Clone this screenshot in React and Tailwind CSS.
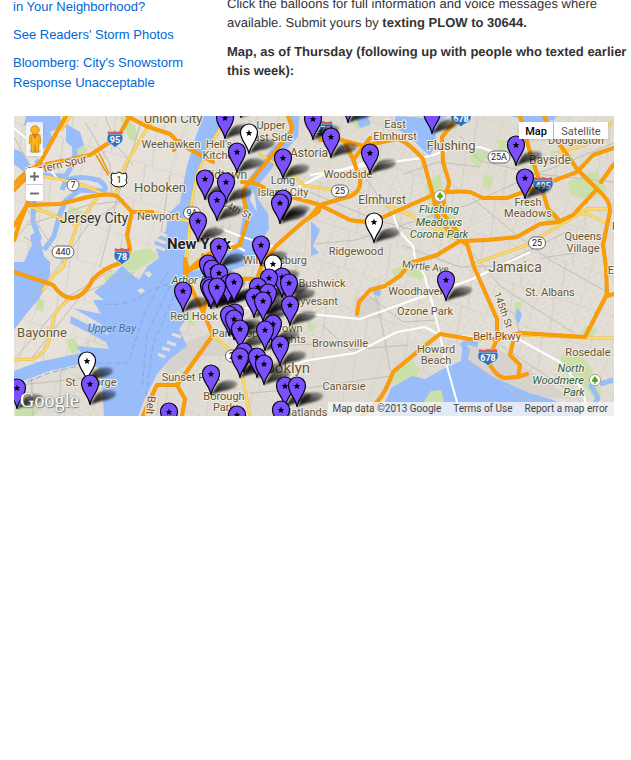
import React from 'react';

const pins = [
  [241, 97], [348, 102], [432, 113], [225, 118], [313, 119], [249, 133, 1], [331, 137],
  [516, 145], [237, 152], [370, 153], [283, 158], [525, 178], [205, 179], [226, 182],
  [217, 200], [283, 199], [280, 203], [198, 221], [374, 222, 1], [261, 245], [219, 247],
  [273, 264, 1], [208, 264], [212, 269], [219, 273], [282, 277], [269, 278], [446, 280],
  [228, 284], [234, 282], [289, 283], [209, 286], [211, 288], [217, 287], [258, 287],
  [183, 291], [268, 293], [254, 297], [263, 301], [290, 305], [235, 313], [229, 315],
  [234, 319], [273, 324], [240, 329], [265, 330], [280, 345], [244, 352], [240, 357],
  [257, 357], [264, 364], [87, 361, 1], [211, 374], [90, 384], [285, 386], [297, 386],
  [17, 388], [281, 410], [169, 412], [237, 415],
];

const orange = [
  'M66 116L53 139L41 161Q38 166 24 174L14 184',
  'M14 190L24 180L38 166L90 155L118 137L130 116',
  'M38 166L32 190L27 205L14 226', 'M27 205L20 222L14 240',
  'M127 116L146 126L170 134L180 144L213 162',
  'M27 205L60 204L88 197Q110 192 118 197L132 212L127 235L130 249Q130 255 120 263Q104 268 93 279Q84 297 72 298Q62 298 53 285L14 272',
  'M132 212L152 212', 'M174 150L180 141',
  'M288 116Q294 128 290 133L250 182Q241 190 244 199L248 219L240 245Q220 252 210 253L195 264L185 275L203 312L213 335L177 385L157 385Q151 397 143 416',
  'M185 275L185 259L188 270L199 266', 'M177 385L185 399L182 416', 'M203 312L207 300',
  'M242 182L255 183L270 191L317 204Q322 207 318 212L303 222L277 245L263 262L257 279L217 278L209 268L203 255',
  'M320 140L337 139L363 146L397 139Q407 141 423 159L433 195L444 215L467 244L474 267L497 319L497 339L490 356L490 365Q497 377 505 378L517 377L527 374',
  'M513 342L510 355L520 365L518 377',
  'M345 142L353 159L360 179Q362 190 351 196L320 205L350 220Q370 224 379 219L433 195Q450 190 470 192L483 198L507 198L537 187L577 172L593 155L614 148',
  'M370 138L353 160', 'M320 205L310 217',
  'M457 119L442 137L443 162L449 182Q449 190 443 195L445 215',
  'M433 195L437 215L450 233L467 244',
  'M520 116L530 152L542 189L548 209L558 219',
  'M544 116L558 142L577 169L597 189Q611 201 610 211L603 245L606 267L607 294L585 337L520 333L497 339L470 339L440 334L417 352L393 372Q386 392 377 402L362 416',
  'M607 296L614 294', 'M614 164L601 182',
  'M597 189L573 215L558 222L540 224L517 237L487 240L460 241L437 255L410 263L400 276L385 286L370 290L359 302L357 314',
];
const yellow = [
  'M156 116L148 127L125 165L115 195', 'M38 175L77 183L107 195', 'M100 194L77 225L63 267Q48 281 43 290',
  'M27 205L77 225', 'M72 298Q52 311 53 321L49 341Q46 352 33 359L14 360',
  'M228 116L210 145L197 175L192 199L190 222L187 259L185 275', 'M152 212L188 221',
  'M260 154L293 175L303 185L360 194L410 215L470 247', 'M473 264L527 245L587 209L610 209',
  'M580 213L588 214L604 222', 'M560 152L587 144L614 120', 'M213 335L232 352L243 379L250 416', 'M520 335L590 338L614 338', 'M70 116L62 129',
];
const white = [
  'M14 128L28 140L45 163L60 182', 'M310 175L370 165L422 158L433 155L450 149L480 147L494 152',
  'M393 214L399 231L413 246L416 263L424 274L432 302L440 335L446 363L457 402L460 416',
  'M245 308L310 314L360 319L427 295L470 280L530 252', 'M255 374L310 360L355 353L397 332L425 327L440 335',
  'M440 335L520 340L560 362L583 390L588 416', 'M217 227L240 236L277 248', 'M215 235L245 251', 'M275 200L320 176L375 160',
];
const minor = 'M105 116L118 147L133 165M85 122L110 164L112 194M28 225L88 205L122 201M14 242L44 202M140 125L116 203L100 267M22 310L62 262L88 225L124 199M17 356L68 297L112 270M31 359L83 293L135 272M170 175L160 239M231 225L215 248M248 282L270 330L290 416M213 336L270 307L314 302M230 354L302 344L350 346M315 244L356 240L437 214L470 204L520 181L614 143M310 192L376 220L414 230M337 140L374 190L404 230M404 174L438 162L480 167M472 198L513 232L550 260L614 296M470 250L500 286L574 333M402 245L460 267L530 265M498 300L515 315L520 334M510 260L570 230M368 295L403 322L437 320M322 325L350 350L408 345M374 290L383 330L390 371M460 136L480 161L537 174L614 182M541 258L590 251M250 393L300 389L391 376M465 360L495 378L520 397L550 405M500 345L575 395L590 416M61 370L59 416M31 371L33 416M97 377L18 385M14 137L43 188M24 237L44 248M28 210L66 267';
const water = [
  'M26 116L60 116L62 127L50 132L54 142L43 149L38 141L28 137L36 129L24 125Z',
  'M66 124L80 132L84 145L76 150L66 142Z',
  'M14 149L22 152L30 164L24 172L14 164Z',
  'M14 262L24 262L32 245L30 236L38 230L44 256L50 262L50 275L46 287L38 300L26 314L14 330Z',
  'M203 116L226 116L213 139L199 169L193 199L188 232L184 259L193 271L209 268L219 258L236 248L240 232L244 211L241 196L247 181L272 148L291 131L286 116L299 116L298 137L282 154L270 171L259 184L258 199L268 214L269 229L258 246L251 264L225 272L210 272L198 280L182 286L179 303L187 318L179 329L187 346L170 359L157 374L145 398L138 416L104 416L102 382L99 368L85 363L50 371L14 384L14 371L38 362L81 353L77 346L109 349L106 342L70 323L71 316L108 335L110 329L73 308L101 314L93 300L104 300L94 292L105 283L122 266L139 280L148 266L159 258L154 241L166 231L168 214L180 203L186 170L193 145Z',
  'M355 116L367 116L371 124L360 128Z',
  'M396 116L427 118L447 116L435 126L436 143L430 156L417 144L409 136L399 130L394 122Z',
  'M433 199L441 202L443 214L438 216L441 227L434 219Z',
  'M320 416L380 416L391 388L412 376L425 379L443 369L461 361L463 340L470 350L468 359L491 376L529 393L550 399L573 408L580 416Z',
  'M517 308L522 314L519 324L515 318Z', 'M374 286L381 291L380 297L373 294Z',
  'M511 116L557 116L553 121L546 119L542 127L533 122L527 127L521 119Z',
  'M311 221L320 230L313 246L319 253L311 256Z',
];
const streams = [
  'M74 132L75 160L66 176L48 176L36 160', 'M62 190L66 180Q80 175 98 180Q108 186 104 191L80 190L66 200L60 214L54 236L44 250',
  'M34 196L33 222L40 240', 'M461 346L468 342L478 345', 'M590 384L598 398L590 412', 'M600 384L613 380',
];
const parks = [
  'M119 116L135 125L138 141L130 140Z', 'M75 138L88 150L80 158L72 154Z', 'M69 206L83 211L78 226L69 218Z',
  'M134 251L150 248L158 256L144 266L134 272L120 267Z', 'M104 277L113 272L119 281L107 286Z', 'M37 297L45 301L42 312L35 309Z',
  'M426 182L440 174L445 195L448 230L437 241L430 222Z', 'M434 205L456 218L460 238L450 241Z',
  'M472 147L490 153L478 168L469 159Z', 'M568 182L597 170L607 190L590 200L570 195Z', 'M540 210L556 211L560 224L549 226Z',
  'M392 270L412 261L427 274L420 280L405 274L395 281Z', 'M498 140L516 140L514 151L499 151Z', 'M531 153L540 159L535 175L529 172Z',
  'M396 371L409 359L420 369L417 377L405 387L388 382Z', 'M422 390L432 388L437 398L425 408Z', 'M560 356L575 352L590 366L602 394L595 399L579 381L561 371Z',
  'M515 302L522 302L520 316L513 313Z', 'M258 335L267 333L269 345L259 346Z', 'M65 340L75 338L80 350L72 354Z',
  'M18 401L43 406L34 416L15 416Z', 'M186 316L196 318L194 326L187 324Z',
  'M586 325L599 330L591 337L581 334Z', 'M484 174L494 178L490 190L482 184Z',
  'M550 150L560 151L558 159L551 157Z', 'M350 120L365 116L370 126L358 130Z', 'M307 319L316 326L312 333L307 330Z',
];

const labels = [
  ['Union City', 173, 123, 13], ['Weehawken', 171, 148, 11], ["Hell's", 219, 148, 11], ['Kitchen', 221, 159, 11],
  ['Upper', 271, 129, 11], ['East Side', 270, 141, 11], ['Midtown', 224, 179, 12], ['Astoria', 309, 157, 12],
  ['Hoboken', 160, 192, 13], ['Newport', 158, 220, 11], ['Long', 283, 184, 11], ['Island City', 283, 196, 11],
  ['Williamsburg', 275, 264, 11], ['Bushwick', 322, 287, 11], ['Stuyvesant', 311, 305, 11], ['Woodside', 348, 178, 11],
  ['East', 395, 128, 11], ['Elmhurst', 395, 140, 11], ['Elmhurst', 382, 204, 12], ['Flushing', 451, 150, 13],
  ['Douglaston', 576, 144, 11], ['Bayside', 550, 164, 12], ['Fresh', 528, 206, 11], ['Meadows', 528, 217, 11],
  ['Ridgewood', 356, 255, 11], ['Queens', 583, 240, 11], ['Village', 583, 252, 11], ['Jamaica', 515, 272, 14],
  ['St. Albans', 550, 296, 11], ['Woodhaven', 417, 295, 11], ['Ozone Park', 425, 315, 11], ['Brownsville', 340, 347, 11],
  ['Howard', 436, 353, 11], ['Beach', 436, 364, 11], ['Canarsie', 344, 390, 11], ['Flatlands', 305, 416, 11],
  ['Crown', 287, 332, 11], ['Heights', 287, 343, 11], ['Brooklyn', 281, 373, 15], ['Park Slope', 238, 337, 11],
  ['Red Hook', 194, 320, 11], ['Sunset Park', 191, 381, 11], ['Borough', 224, 400, 11], ['Park', 224, 411, 11],
  ['Bayonne', 42, 337, 13], ['St. George', 91, 386, 11], ['Rosedale', 588, 356, 11], ['F', 615, 230, 11], ['E', 611, 274, 11],
];
const parkLabels = [
  ['Flushing', 439, 213, 11], ['Meadows', 439, 226, 11], ['Corona Park', 439, 238, 11],
  ['Arbor Pk', 192, 284, 11], ['North', 571, 372, 11], ['Woodmere', 558, 384, 11], ['Park', 574, 396, 11],
];

function Shield({ x, y, n }) {
  return n.length > 2 ? (
    <g transform={`translate(${x} ${y})`}>
      <path d="M-9.5-5H9.5C11.5 1 9 4 5 5.5Q2 6.5 0 9Q-2 6.5-5 5.5C-9 4-11.5 1-9.5-5Z" fill="#3272bd" stroke="#e8eef6" strokeWidth=".7" />
      <path d="M-8.5-8Q-5-6 0-8Q5-6 8.5-8L9.5-5H-9.5Z" fill="#d9585b" />
      <text y="4" textAnchor="middle" fontSize="9" fontWeight="700" fill="#fff">{n}</text>
    </g>
  ) : (
    <g transform={`translate(${x} ${y})`}>
      <path d="M-7-5H7C9.5 1 7 4 4 5.5Q1.5 6.5 0 9Q-1.5 6.5-4 5.5C-7 4-9.5 1-7-5Z" fill="#3272bd" stroke="#e8eef6" strokeWidth=".7" />
      <path d="M-7-8Q-4-6 0-8Q4-6 7-8L7.5-5H-7.5Z" fill="#d9585b" />
      <text y="4" textAnchor="middle" fontSize="9" fontWeight="700" fill="#fff">{n}</text>
    </g>
  );
}

function Route({ x, y, n }) {
  const w = n.length * 5 + 7;
  return (
    <g>
      <rect x={x - w / 2} y={y - 6} width={w} height="12" rx="6" fill="#fff" stroke="#666" />
      <text x={x} y={y + 3} textAnchor="middle" fontSize="9" fill="#222">{n}</text>
    </g>
  );
}

function ParkBadge({ x, y }) {
  return (
    <g transform={`translate(${x} ${y})`}>
      <circle r="5.6" fill="#fff" stroke="#a3a78f" />
      <path d="M0-4L3 0L2.5 2H.7V4H-.7V2H-2.5L-3 0Z" fill="#56a51d" />
    </g>
  );
}

function MapCanvas() {
  return (
    <svg viewBox="14 116 600 300" preserveAspectRatio="xMidYMid slice" className="block h-full w-full font-[Roboto,sans-serif]" role="img" aria-label="Map of New York City text reports">
      <defs>
        <pattern id="grid" width="7" height="5" patternUnits="userSpaceOnUse" patternTransform="rotate(-24)">
          <path d="M0 0H7M0 0V5" stroke="#ece8e0" strokeWidth=".9" />
        </pattern>
        <pattern id="grid2" width="6" height="9" patternUnits="userSpaceOnUse" patternTransform="rotate(32)">
          <path d="M0 0H6M0 0V9" stroke="#e9e5dd" strokeWidth=".9" />
        </pattern>
        <pattern id="blocks" width="43" height="37" patternUnits="userSpaceOnUse" patternTransform="rotate(18)">
          <path d="M0 0H43M0 0V37M17 0L24 37" stroke="#cdc9c2" strokeWidth=".8" fill="none" />
        </pattern>
        <filter id="soft" x="-30%" y="-30%" width="160%" height="160%"><feGaussianBlur stdDeviation="1.2" /></filter>
        <linearGradient id="fade" x1="0" y1="1" x2="1" y2="0">
          <stop offset="0" stopOpacity=".95" />
          <stop offset=".5" stopOpacity=".7" />
          <stop offset="1" stopOpacity=".25" />
        </linearGradient>
        <path id="shadow" d="M0 21C4 16 5 9 13 7C21 5 29 7 25 12C21 17 9 16 0 21Z" fill="url(#fade)" filter="url(#soft)" />
        <path id="balloon" d="M0 21C-1 12-8.5 8-8.5-.5A8.5 8.5 0 1 1 8.5-.5C8.5 8 1 12 0 21Z" stroke="#090611" strokeWidth="1.2" />
        <path id="star" d="M0-3.4L.9-1.1L3.4-1L1.5.6L2.1 3L0 1.7L-2.1 3L-1.5.6L-3.4-1L-.9-1.1Z" fill="#000" />
      </defs>
      <rect x="14" y="116" width="600" height="300" fill="#dfdbd2" />
      <path d="M14 116H203L186 180L150 262L60 370L14 384Z" fill="#e5e1d9" />
      <path d="M100 194L187 116H14V416H120V250ZM184 250L255 170L278 116H225ZM300 230L420 160L614 220V416H480V340H300Z" fill="url(#grid)" />
      <path d="M184 300L300 230V416H150ZM290 130L614 116V220L420 160L300 230ZM340 250H614V340H400Z" fill="url(#grid2)" />
      <rect x="14" y="116" width="600" height="300" fill="url(#blocks)" />
      <path d="M459 345L500 350L572 399L530 396L488 378ZM165 348L213 333L236 356L200 356L165 380ZM355 296L380 298L383 318L355 319Z" fill="#d8d2cd" />
      {parks.map((d) => <path key={d} d={d} fill="#cadfaa" />)}
      {water.map((d) => <path key={d} d={d} fill="#99bcfa" />)}
      {streams.map((d) => <path key={d} d={d} fill="none" stroke="#99bcfa" strokeWidth="5" strokeLinejoin="round" />)}
      <path d="M144 273l5-2 3 3-3 4ZM137 290l5-2 3 3-4 3ZM257 212l-7-12 2-12 3 9Z" fill="#e5e0d8" />
      <path d="M431 391l10-1 3 11-13 8-7-8Z" fill="#cadfaa" />
      <path d={minor} fill="none" stroke="#c3bfb8" strokeWidth="1" />
      <path d="M104 304Q130 307 151 290L176 281M168 271L145 312L128 363H91L49 373L14 387M170 286L147 334L142 388M174 296L153 344L146 397" fill="none" stroke="#86a9df" strokeWidth="1" strokeDasharray="6 3" />
      <path d="M155 232l12 4M154 239l12 4M155 246l10 4M181 337l-9-3M176 345l-9-3M170 350l-8-2M165 357l-7-3" stroke="#e4e0d8" strokeWidth="3" />
      {white.map((d) => <path key={d} d={d} fill="none" stroke="#fff" strokeWidth="2" strokeLinejoin="round" />)}
      <g fill="none" strokeLinejoin="round" strokeLinecap="round">
        {yellow.map((d) => <path key={d} d={d} stroke="#e3b951" strokeWidth="3" />)}
        {yellow.map((d) => <path key={d} d={d} stroke="#ffdb62" strokeWidth="2" />)}
        {orange.map((d) => <path key={d} d={d} stroke="#ee9414" strokeWidth="4" />)}
        {orange.map((d) => <path key={d} d={d} stroke="#fb9e05" strokeWidth="3" />)}
        <path d="M96 155L108 175M99 153L109 173" stroke="#e99413" strokeWidth="1.5" />
      </g>
      <Shield x={115} y={139} n="95" />
      <Shield x={122} y={256} n="78" />
      <Shield x={323} y={129} n="278" />
      <Shield x={461} y={118} n="678" />
      <Shield x={543} y={185} n="495" />
      <Shield x={488} y={357} n="678" />
      <Route x={73} y={185} n="7" />
      <Route x={63} y={252} n="440" />
      <Route x={192} y={213} n="9A" />
      <Route x={340} y={191} n="25" />
      <Route x={499} y={157} n="25A" />
      <Route x={537} y={243} n="25" />
      <Route x={234} y={356} n="27" />
      <path d="M112 173q4 2 7-1q3 3 7 1l1 4q-2 3 0 6q-2 4-8 4q-6 0-8-4q2-3 0-6Z" fill="#fff" stroke="#111" />
      <text x="119" y="183" textAnchor="middle" fontSize="9" fill="#111">1</text>
      <g textAnchor="middle" fill="#655635" stroke="#f2eee6" strokeWidth="2" strokeLinejoin="round" className="[paint-order:stroke]">
        {labels.map(([t, x, y, s]) => <text key={t + y} x={x} y={y} fontSize={s}>{t}</text>)}
        <text x="94" y="223" fontSize="14" fill="#333">Jersey City</text>
        <text x="199" y="249" fontSize="15" fontWeight="700" fill="#222">New York</text>
        <g fill="#874a0d">
          <text x="497" y="340" fontSize="11">Belt Pkwy</text>
          <text fontSize="11" transform="translate(57 169) rotate(-13)">Eastern Spur</text>
          <text fontSize="11" transform="translate(147 405) rotate(96)">Belt</text>
        </g>
        <text fontSize="10" transform="translate(230 210) rotate(27)">W 34th St</text>
        <text fontSize="10" transform="translate(425 270) rotate(7)">Myrtle Ave</text>
        <text fontSize="10" transform="translate(500 311) rotate(70)">145th St</text>
        <g fill="#316038" fontStyle="italic">
          {parkLabels.map(([t, x, y, s]) => <text key={t + y} x={x} y={y} fontSize={s}>{t}</text>)}
        </g>
        <text x="112" y="332" fontSize="11" fontStyle="italic" fill="#4e6f98" stroke="#a9c8fa">Upper Bay</text>
      </g>
      <ParkBadge x={440} y={196} />
      <ParkBadge x={595} y={380} />
      {pins.map(([x, y]) => <use key={`${x}-${y}`} href="#shadow" x={x} y={y} />)}
      {pins.map(([x, y, plain]) => (
        <g key={`${x}-${y}`} transform={`translate(${x} ${y})`}>
          <use href="#balloon" fill={plain ? '#fff' : '#7b51ff'} />
          <use href="#star" />
        </g>
      ))}
    </svg>
  );
}

function Pegman() {
  return (
    <svg viewBox="0 0 16 30" className="h-[30px] w-4" aria-hidden="true">
      <ellipse cx="8" cy="27" rx="6" ry="2" fill="#999" opacity=".5" />
      <path d="M3 11Q8 8 13 11L14 19L12 20L11.5 28H8.7L8 21L7.3 28H4.5L4 20L2 19Z" fill="#f7b51b" stroke="#c28709" strokeWidth=".8" />
      <path d="M5 10L8 15L11 10Z" fill="#e66848" />
      <circle cx="8" cy="6" r="4.2" fill="#f8b820" stroke="#c28709" strokeWidth=".8" />
      <path d="M4.5 13V19M11.5 13V19" stroke="#d79413" strokeWidth=".8" />
    </svg>
  );
}

export default function App() {
  return (
    <main className="overflow-hidden bg-white font-['Liberation_Sans',Arial,sans-serif] text-[13px] text-[#333]">
      <div className="-mt-[3px] flex h-[119px]">
        <nav className="flex w-[227px] shrink-0 flex-col gap-2 pr-6 pl-[13px] leading-5 text-[#0066d6]">
          <a href="#plows">in Your Neighborhood?</a>
          <a href="#photos">See Readers' Storm Photos</a>
          <a href="#bloomberg">Bloomberg: City's Snowstorm Response Unacceptable</a>
        </nav>
        <article className="-mt-[3px] flex min-w-0 flex-col gap-2.5 leading-[19px] [text-rendering:geometricPrecision]">
          <p>Click the balloons for full information and voice messages where available. Submit yours by <strong>texting PLOW to 30644.</strong></p>
          <p className="font-bold">Map, as of Thursday (following up with people who texted earlier this week):</p>
        </article>
      </div>
      <section className="relative mr-[17px] ml-3.5 h-[300px] overflow-hidden font-[Roboto,sans-serif]" aria-label="Storm map">
        <MapCanvas />
        <div className="absolute top-1.5 left-3 flex w-[17px] flex-col items-center gap-3">
          <button type="button" aria-label="Street View" className="flex h-[34px] w-[17px] items-center justify-center rounded-xs bg-[#f5f5f5]/90 shadow"><Pegman /></button>
          <div className="flex w-[17px] flex-col rounded-xs bg-white text-[#666] shadow">
            <button type="button" aria-label="Zoom in" className="flex h-[17px] items-center justify-center border-b border-[#ccc]">
              <svg viewBox="0 0 9 9" className="h-[9px] w-[9px]"><path d="M0 4.5H9M4.5 0V9" stroke="currentColor" strokeWidth="1.8" /></svg>
            </button>
            <button type="button" aria-label="Zoom out" className="flex h-4 items-center justify-center">
              <svg viewBox="0 0 9 9" className="h-[9px] w-[9px]"><path d="M0 4.5H9" stroke="currentColor" strokeWidth="1.8" /></svg>
            </button>
          </div>
        </div>
        <div className="absolute top-1.5 right-1.5 flex h-[17px] bg-white text-[11px] leading-[19px] shadow">
          <button type="button" className="w-[35px] border-r border-[#a3b8da] font-medium text-black">Map</button>
          <button type="button" className="w-[54px] text-[#555]">Satellite</button>
        </div>
        <a href="#google" className="absolute bottom-1 left-1.5 font-['Liberation_Serif',serif] text-[20px] leading-6 text-white [text-shadow:0_0_2px_#666,1px_1px_1px_#888]">Google</a>
        <footer className="absolute right-0 bottom-0 flex h-[14px] gap-3 bg-[#f5f5f5]/80 pr-1.5 pl-1 text-[10px] leading-[14px] whitespace-nowrap text-[#444]">
          <span>Map data ©2013 Google</span>
          <a href="#terms">Terms of Use</a>
          <a href="#report">Report a map error</a>
        </footer>
      </section>
    </main>
  );
}
